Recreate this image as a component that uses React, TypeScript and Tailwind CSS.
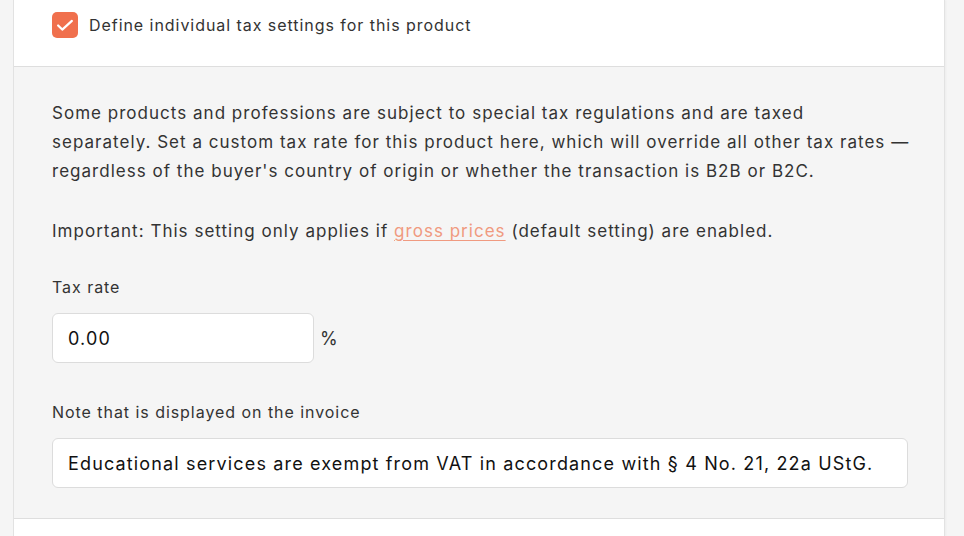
export default function App() {
  return (
    <div className="min-h-[536px] bg-[#f5f5f5] font-['Inter','Noto_Sans',sans-serif] text-[#333]">
      <div className="ml-[13px] w-[932px] min-h-[536px] border-x border-[#e2e2e2] bg-white shadow-[1px_0_2px_rgba(0,0,0,0.04)]">
        <div className="flex h-[66px] items-start gap-[11px] px-[38px] pt-[12px]">
          <span className="flex h-[26px] w-[26px] items-center justify-center rounded-[5px] bg-[#f0704d]">
            <svg viewBox="0 0 24 24" className="h-[22px] w-[22px]" fill="none" stroke="white" strokeWidth="2.4" strokeLinecap="round" strokeLinejoin="round">
              <path d="M4.5 12.5l4.5 4.5L19.5 7.5" />
            </svg>
          </span>
          <span className="pt-[1px] text-[16px] leading-[24px] tracking-[0.95px]">Define individual tax settings for this product</span>
        </div>
        <div className="border-y border-[#dedede] bg-[#f5f5f5] px-[38px] pb-[30px] pt-[32px]">
          <p className="-mr-[8px] text-[17px] leading-[29px] tracking-[1.02px]">
            Some products and professions are subject to special tax regulations and are taxed
            <br />
            separately. Set a custom tax rate for this product here, which will override all other tax rates — regardless of the buyer's country of origin or whether the transaction is B2B or B2C.
          </p>
          <p className="mt-[31px] text-[17px] leading-[29px] tracking-[1.02px]">
            Important: This setting only applies if{' '}
            <span className="text-[#f09a80] underline underline-offset-[3px]">gross prices</span> (default setting) are enabled.
          </p>
          <div className="mt-[29px] text-[16px] leading-[24px] tracking-[0.95px]">Tax rate</div>
          <div className="mt-[14px] flex items-center gap-[6px]">
            <div className="flex h-[50px] w-[262px] items-center rounded-[6px] border border-[#dcdcdc] bg-white px-[15px] text-[18px] tracking-[1.15px] text-[#111]">
              0.00
            </div>
            <span className="text-[18px]">%</span>
          </div>
          <div className="mt-[37px] text-[16px] leading-[24px] tracking-[0.95px]">Note that is displayed on the invoice</div>
          <div className="mt-[14px] flex h-[50px] w-[856px] items-center rounded-[6px] border border-[#dcdcdc] bg-white px-[15px] text-[18px] tracking-[1.15px] text-[#111]">
            Educational services are exempt from VAT in accordance with § 4 No. 21, 22a UStG.
          </div>
        </div>
      </div>
    </div>
  );
}
